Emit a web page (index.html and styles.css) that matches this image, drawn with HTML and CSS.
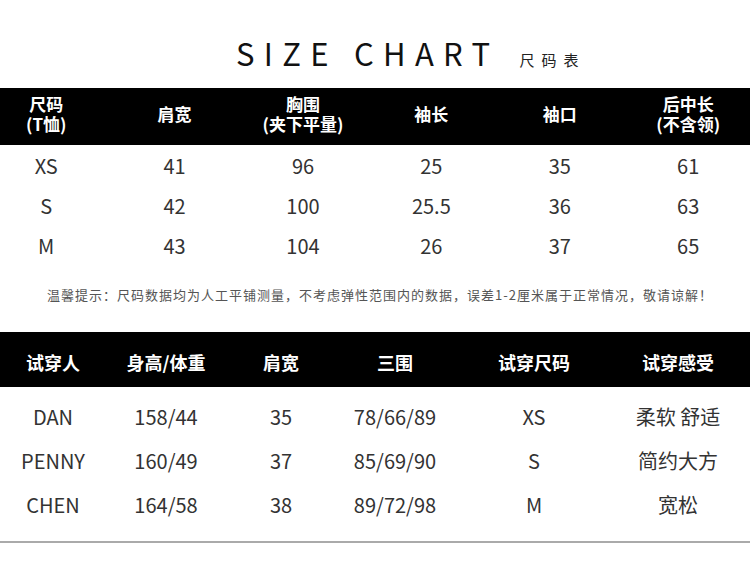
FILE: index.html
```html
<!DOCTYPE html>
<html lang="zh">
<head>
<meta charset="utf-8">
<title>Size Chart</title>
<link rel="stylesheet" href="styles.css">
</head>
<body>
<div class="page">
  <div class="title">
    <span class="title-en">SIZE CHART</span>
    <span class="title-cn">尺码表</span>
  </div>

  <div class="bar bar-size">
    <div class="grid-size head-size">
      <div class="hc"><div class="hl">尺码</div><div class="hl">(T恤)</div></div>
      <div class="hc"><div class="hl">肩宽</div></div>
      <div class="hc"><div class="hl">胸围</div><div class="hl">(夹下平量)</div></div>
      <div class="hc"><div class="hl">袖长</div></div>
      <div class="hc"><div class="hl">袖口</div></div>
      <div class="hc"><div class="hl">后中长</div><div class="hl">(不含领)</div></div>
    </div>
  </div>

  <div class="rows-size">
    <div class="grid-size row-size"><div>XS</div><div>41</div><div>96</div><div>25</div><div>35</div><div>61</div></div>
    <div class="grid-size row-size"><div>S</div><div>42</div><div>100</div><div>25.5</div><div>36</div><div>63</div></div>
    <div class="grid-size row-size"><div>M</div><div>43</div><div>104</div><div>26</div><div>37</div><div>65</div></div>
  </div>

  <p class="note">温馨提示：尺码数据均为人工平铺测量，不考虑弹性范围内的数据，误差1-2厘米属于正常情况，敬请谅解！</p>

  <div class="bar bar-try">
    <div class="grid-try head-try">
      <div>试穿人</div><div>身高/体重</div><div>肩宽</div><div>三围</div><div>试穿尺码</div><div>试穿感受</div>
    </div>
  </div>

  <div class="rows-try">
    <div class="grid-try row-try"><div>DAN</div><div>158/44</div><div>35</div><div>78/66/89</div><div>XS</div><div>柔软 舒适</div></div>
    <div class="grid-try row-try"><div>PENNY</div><div>160/49</div><div>37</div><div>85/69/90</div><div>S</div><div>简约大方</div></div>
    <div class="grid-try row-try"><div>CHEN</div><div>164/58</div><div>38</div><div>89/72/98</div><div>M</div><div>宽松</div></div>
  </div>

  <div class="rule"></div>
</div>
</body>
</html>
```

FILE: styles.css
```css
* { box-sizing: border-box; }
html, body { margin: 0; padding: 0; background: #fff; }
body {
  width: 750px;
  height: 566px;
  overflow: hidden;
  font-family: "Noto Sans CJK SC", "Noto Sans", sans-serif;
  color: #333;
}
.page { width: 750px; }

.title {
  height: 88px;
  display: flex;
  align-items: baseline;
  padding-top: 35px;
  padding-left: 236px;
}
.title-en {
  font-size: 31px;
  line-height: 36px;
  letter-spacing: 9.3px;
  color: #111;
  font-weight: 400;
}
.title-cn {
  margin-left: 20px;
  font-size: 15px;
  letter-spacing: 7px;
  color: #222;
}

.bar { background: #000; color: #fff; overflow: hidden; }
.bar-size { height: 57px; }
.bar-try { height: 55px; }

.grid-size {
  display: grid;
  grid-template-columns: repeat(6, 128.4px);
  margin-left: -18px;
  justify-items: center;
  text-align: center;
}
.head-size {
  height: 57px;
  align-items: center;
  font-size: 17px;
  font-weight: 700;
  padding-bottom: 5px;
}
.hc {
  display: flex;
  flex-direction: column;
  align-items: center;
}
.hl {
  height: 20px;
  line-height: 20px;
  display: flex;
  align-items: center;
  justify-content: center;
}

.rows-size { padding-top: 1px; }
.row-size {
  height: 40px;
  align-items: center;
  font-size: 20px;
  line-height: 40px;
}

.note {
  margin: 0;
  height: 66px;
  padding-top: 21px;
  font-size: 13px;
  line-height: 16px;
  letter-spacing: 1px;
  color: #555;
  text-align: center;
  white-space: nowrap;
  font-weight: 400;
  padding-left: 10px;
}

.grid-try {
  display: grid;
  grid-template-columns: 106px 120px 110px 118px 160px 128px;
  justify-items: center;
  text-align: center;
}
.head-try {
  height: 55px;
  padding-top: 6px;
  align-items: center;
  font-size: 18px;
  line-height: 49px;
  font-weight: 700;
}

.rows-try { padding-top: 8px; height: 154px; }
.row-try {
  height: 44px;
  align-items: center;
  font-size: 20px;
  line-height: 44px;
}

.rule {
  height: 2px;
  background: #aaa;
}
```
